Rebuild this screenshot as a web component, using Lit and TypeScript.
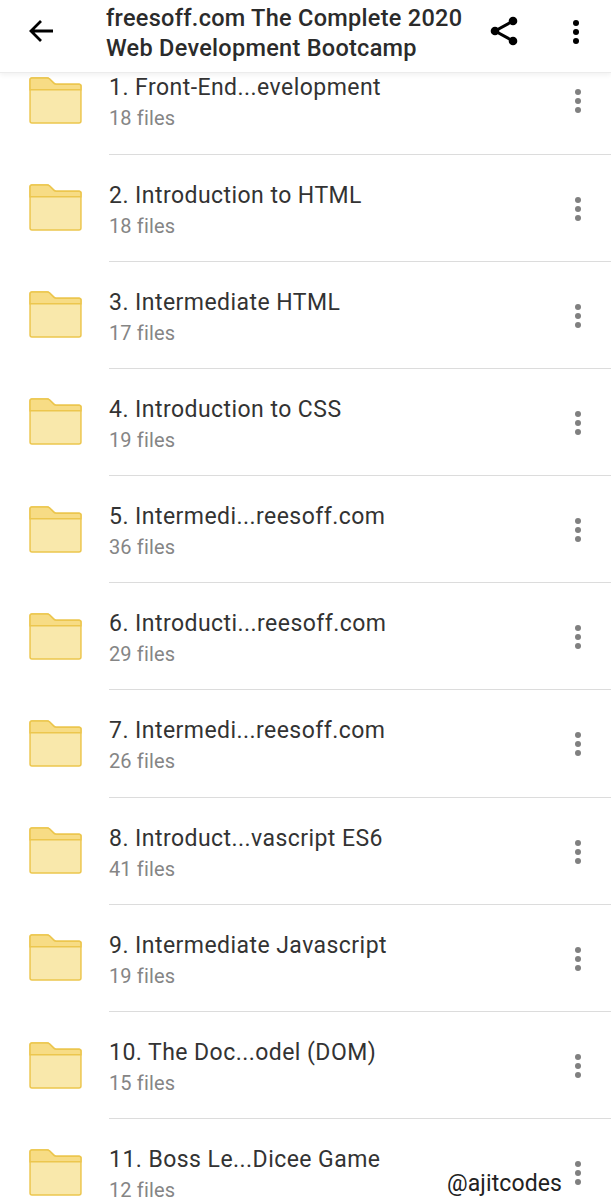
import { css, html, LitElement } from 'lit';
import { customElement } from 'lit/decorators.js';

const folders = [
  ['1. Front-End...evelopment', '18 files'],
  ['2. Introduction to HTML', '18 files'],
  ['3. Intermediate HTML', '17 files'],
  ['4. Introduction to CSS', '19 files'],
  ['5. Intermedi...reesoff.com', '36 files'],
  ['6. Introducti...reesoff.com', '29 files'],
  ['7. Intermedi...reesoff.com', '26 files'],
  ['8. Introduct...vascript ES6', '41 files'],
  ['9. Intermediate Javascript', '19 files'],
  ['10. The Doc...odel (DOM)', '15 files'],
  ['11. Boss Le...Dicee Game', '12 files'],
];

const folderIcon = html`<svg class="folder" width="53" height="47" viewBox="0 0 54 48">
  <path
    d="M3 1h15.500c1 0 1.800.4 2.500 1l4.500 4.500c.6.6 1.400.9 2.200.9H51c1.100 0 2 .9 2 2V45c0 1.100-.9 2-2 2H3a2 2 0 0 1-2-2V3c0-1.100.9-2 2-2z"
    fill="#f9e8ab"
    stroke="#ecc64e"
    stroke-width="1.500"
  />
  <path
    d="M3 1h15.500c1 0 1.800.4 2.500 1l4.500 4.500c.6.6 1.400.9 2.200.9H51c1.100 0 2 .9 2 2v3.600H1V3c0-1.100.9-2 2-2z"
    fill="#f7dc85"
    stroke="#ecc64e"
    stroke-width="1.500"
  />
</svg>`;

@customElement('app-root')
export class AppRoot extends LitElement {
  static override styles = css`
    :host {
      display: block;
      position: relative;
      width: 611px;
      height: 1200px;
      overflow: hidden;
      background: #fff;
      font-family: Roboto, 'Liberation Sans', sans-serif;
    }

    .header {
      position: relative;
      z-index: 1;
      display: flex;
      align-items: center;
      height: 73px;
      background: #fff;
      border-bottom: 1px solid #ececec;
      box-shadow: 0 2px 5px rgba(0, 0, 0, 0.06);
      box-sizing: border-box;
    }

    .back {
      margin: -10px 0 0 29px;
      width: 24px;
      height: 24px;
      flex: none;
    }

    .title {
      margin: -6px 0 0 53px;
      flex: 1;
      font-size: 23.5px;
      font-weight: 500;
      line-height: 30px;
      letter-spacing: 0.28px;
      color: #2b2b2b;
      white-space: nowrap;
    }

    .share {
      flex: none;
      width: 30px;
      height: 30px;
      margin: -10px 54px 0 0;
    }

    .menu {
      flex: none;
      width: 8px;
      height: 28px;
      margin: -9px 31px 0 0;
    }

    .list {
      margin-top: -25.7px;
    }

    .row {
      display: flex;
      height: 107.2px;
      box-sizing: border-box;
    }

    .folder {
      flex: none;
      margin: 29.500px 0 0 29px;
    }

    .body {
      flex: 1;
      display: flex;
      margin-left: 27px;
      border-bottom: 1px solid #dcdcdc;
    }

    .text {
      flex: 1;
      padding-top: 26px;
    }

    .name {
      font-size: 23px;
      line-height: 30px;
      letter-spacing: 0.45px;
      color: #333;
      white-space: nowrap;
    }

    .count {
      margin-top: 2px;
      font-size: 20px;
      line-height: 26px;
      letter-spacing: 0.13px;
      color: #858585;
    }

    .more {
      flex: none;
      width: 8px;
      height: 26px;
      margin: 41px 29px 0 0;
    }

    .watermark {
      position: absolute;
      left: 447px;
      top: 1169px;
      font-size: 23px;
      line-height: 30px;
      letter-spacing: 0.1px;
      color: #222;
    }
  `;

  protected override render() {
    return html`<div class="header">
        <svg class="back" viewBox="0 0 24 24" fill="none" stroke="#000" stroke-width="2.800">
          <path d="M24 12H2M12 2 2 12l10 10" />
        </svg>
        <div class="title">freesoff.com The Complete 2020<br />Web Development Bootcamp</div>
        <svg class="share" viewBox="0 0 30 30" stroke="#000" stroke-width="3">
          <path d="M25 5 7 15l18 10" fill="none" />
          <circle cx="25" cy="5" r="4.300" stroke="none" />
          <circle cx="7" cy="15" r="4.300" stroke="none" />
          <circle cx="25" cy="25" r="4.300" stroke="none" />
        </svg>
        <svg class="menu" viewBox="0 0 8 28">
          <circle cx="4" cy="5" r="3" />
          <circle cx="4" cy="14" r="3" />
          <circle cx="4" cy="23" r="3" />
        </svg>
      </div>
      <div class="list">
        ${folders.map(
          ([name, count]) => html`<div class="row">
            ${folderIcon}
            <div class="body">
              <div class="text">
                <div class="name">${name}</div>
                <div class="count">${count}</div>
              </div>
              <svg class="more" viewBox="0 0 8 26" fill="#808080">
                <circle cx="4" cy="4" r="3" />
                <circle cx="4" cy="13" r="3" />
                <circle cx="4" cy="22" r="3" />
              </svg>
            </div>
          </div>`,
        )}
      </div>
      <div class="watermark">@ajitcodes</div>`;
  }
}
